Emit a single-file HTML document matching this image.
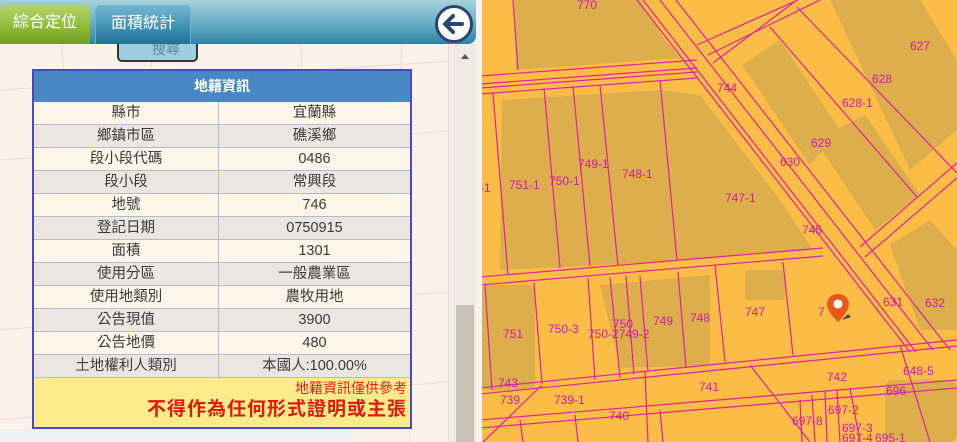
<!DOCTYPE html>
<html><head><meta charset="utf-8"><style>
*{margin:0;padding:0;box-sizing:border-box}
body{width:957px;height:442px;overflow:hidden;position:relative;background:#fff;font-family:"Liberation Sans","Noto Sans CJK TC",sans-serif}
#left{position:absolute;left:0;top:0;width:478px;height:442px;background:#fbf3e9;overflow:hidden}
#tabs{position:absolute;left:0;top:0;width:476px;height:44px;background:linear-gradient(#a7d2dc,#5fa9bf 60%,#2d84a6);border-radius:0 0 8px 0}
.tab{position:absolute;top:5px;height:39px;color:#fff;font-size:16px;line-height:36px;text-align:center;border-radius:6px 6px 0 0}
#t1{left:0;width:90px;background:linear-gradient(#b6d46a,#8db936 60%,#6f9d22)}
#t2{left:95px;width:96px;background:linear-gradient(#72b6cf,#3b8db0 60%,#236f95);border:1px solid #6fb0c8;border-bottom:none}
#back{position:absolute;left:435px;top:5px;width:38px;height:38px;border-radius:50%;background:#fff;border:3px solid #2a4572}
#btn{position:absolute;left:117px;top:44px;width:81px;height:18px;border:2px solid #333;border-top:none;border-radius:0 0 5px 5px;background:#9dd0dc;color:#5a8aa0;font-size:14px;line-height:10px;padding-left:33px;overflow:hidden}
#tbl{position:absolute;left:32px;top:69px;width:380px;height:360px;border:2px solid #4b48c8;background:#fdf5e8}
#hd{height:31px;background:#4a88c4;color:#fff;font-size:14px;font-weight:bold;text-align:center;line-height:31px}
.r{height:23px;display:flex;font-size:14.5px;color:#3a3a3a;line-height:22px;border-bottom:1px solid #b7b9cf}
.r div{text-align:center}
.r div:first-child{width:185px;border-right:1px solid #b7b9cf}
.r div:last-child{flex:1}
.r.e{background:#e9e7e0}
#ft{position:absolute;left:0;top:307px;width:376px;height:49px;background:#feeb8a;text-align:right;padding-right:3px}
#f1{color:#d22;font-size:14px;line-height:20px}
#f2{color:#e01a10;font-size:19px;font-weight:bold;line-height:24px;letter-spacing:1px}
#sb{position:absolute;left:448px;top:44px;width:28px;height:398px;background:#f0ece4;border-left:1px solid #ddd}
#thumb{position:absolute;left:456px;top:305px;width:18px;height:137px;background:#c9c2b6}
#bot{position:absolute;left:0;top:429px;width:352px;height:13px;background:#eef2f3}
#sep{position:absolute;left:478px;top:0;width:4px;height:442px;background:#f3f3f3}
#map{position:absolute;left:482px;top:0}
</style></head><body>
<div id="left">
<svg width="478" height="442" style="position:absolute;left:0;top:0" stroke="#f2d7dc" fill="none" stroke-width="1">
<path d="M0 90L470 60M0 160L470 130M60 0L80 442M150 0L160 442M300 0L310 442M400 0L410 442M0 330L470 290M0 420L470 380"/></svg>
<div id="bot"></div>
<div id="sb"></div><div style="position:absolute;left:461px;top:54px;width:0;height:0;border-left:4px solid transparent;border-right:4px solid transparent;border-bottom:5px solid #555"></div>
<div id="thumb"></div>
<div id="tabs"></div>
<div class="tab" id="t1">綜合定位</div>
<div class="tab" id="t2">面積統計</div>
<div id="back"><svg width="32" height="32" viewBox="0 0 32 32" style="position:absolute;left:0;top:0"><path d="M24 16H8M15 8L7 16L15 24" stroke="#2a4572" stroke-width="4" fill="none" stroke-linecap="round" stroke-linejoin="round"/></svg></div>
<div id="btn">搜尋</div>
<div id="tbl">
<div id="hd">地籍資訊</div>
<div class="r"><div>縣市</div><div>宜蘭縣</div></div>
<div class="r e"><div>鄉鎮市區</div><div>礁溪鄉</div></div>
<div class="r"><div>段小段代碼</div><div>0486</div></div>
<div class="r e"><div>段小段</div><div>常興段</div></div>
<div class="r"><div>地號</div><div>746</div></div>
<div class="r e"><div>登記日期</div><div>0750915</div></div>
<div class="r"><div>面積</div><div>1301</div></div>
<div class="r e"><div>使用分區</div><div>一般農業區</div></div>
<div class="r"><div>使用地類別</div><div>農牧用地</div></div>
<div class="r e"><div>公告現值</div><div>3900</div></div>
<div class="r"><div>公告地價</div><div>480</div></div>
<div class="r e"><div>土地權利人類別</div><div>本國人:100.00%</div></div>
<div id="ft"><div id="f1">地籍資訊僅供參考</div><div id="f2">不得作為任何形式證明或主張</div></div>
</div>
</div>
<div id="sep"></div>
<svg id="map" width="475" height="442" viewBox="2 0 475 442">
<rect x="0" y="0" width="477" height="442" fill="#fcbd46"/>
<g fill="#dcaf4c">
<path d="M34 0H160L185 40L200 58L36 70Z"/>
<path d="M22 100L180 90L220 95L300 200L333 250L180 262L20 270Z"/>
<path d="M262 65L300 40L360 130L330 165Z"/>
<path d="M335 140L385 115L440 195L395 230Z"/>
<path d="M350 0H440L477 60V130L430 170Z"/>
<path d="M410 245L450 220L477 250V330L440 330Z"/>
<path d="M120 285L230 275L230 365L140 368Z"/>
<rect x="0" y="285" width="55" height="105" rx="8"/>
<rect x="405" y="380" width="72" height="62" rx="8"/>
<rect x="265" y="270" width="40" height="30" rx="4"/>
</g>
<g stroke="#e0209f" stroke-width="1.2" fill="none">
<path d="M0 76L217 60M0 84L217 68M0 88L217 72M0 94L217 78"/>
<path d="M157 0L430 352M163 0L436 352M180 0L453 350M196 0L470 350"/>
<path d="M217 45L318 0M228 55L340 0M233 63L317 0"/>
<path d="M0 277L343 248M0 285L343 256"/>
<path d="M380 247L477 163M385 257L477 178"/>
<path d="M290 27L437 197M317 7L477 173"/>
<path d="M0 388L477 340M0 394L477 346M0 420L477 380M0 428L477 388"/>
<path d="M33 0L38 70M13 93L28 275M64 88L80 268M93 86L110 266M120 85L138 266M180 80L197 260"/>
<path d="M5 285L12 390M54 283L62 384M108 278L115 380M130 277L140 378M146 276L154 374M160 276L168 372M198 272L206 367M235 265L245 362M303 262L313 355"/>
<path d="M0 445L62 385M270 365L330 442M165 372L168 442M40 420L43 442M95 415L98 442M180 410L183 442M320 400L322 442M332 395L335 442M345 392L347 442M357 390L360 442M370 388L380 442M420 345L450 442"/>
</g>
<g fill="#d01aa8" font-size="12" font-family="Liberation Sans,sans-serif">
<text x="97" y="9">770</text><text x="430" y="50">627</text><text x="392" y="83">628</text>
<text x="237" y="92">744</text><text x="362" y="107">628-1</text><text x="331" y="147">629</text>
<text x="300" y="166">630</text><text x="98" y="168">749-1</text><text x="142" y="178">748-1</text>
<text x="0" y="192">-1</text><text x="29" y="189">751-1</text><text x="69" y="185">750-1</text>
<text x="245" y="202">747-1</text><text x="322" y="234">745</text>
<text x="403" y="306">631</text><text x="445" y="307">632</text>
<text x="265" y="316">747</text><text x="210" y="322">748</text><text x="173" y="325">749</text>
<text x="133" y="328">750</text><text x="68" y="333">750-3</text><text x="23" y="338">751</text>
<text x="108" y="338">750-2749-2</text><text x="338" y="316">7</text>
<text x="347" y="381">742</text><text x="219" y="391">741</text><text x="423" y="375">648-5</text>
<text x="18" y="387">743</text><text x="406" y="395">696</text><text x="20" y="404">739</text>
<text x="74" y="404">739-1</text><text x="129" y="420">740</text><text x="348" y="414">697-2</text>
<text x="312" y="425">697-8</text><text x="362" y="432">697-3</text><text x="362" y="442">697-4</text><text x="395" y="442">695-1</text>
</g>
<path d="M358 302C350 302 347 308 347 312C347 320 358 330 358 330C358 330 369 320 369 312C369 308 366 302 358 302Z" fill="#e8581a" transform="translate(0,-8)"/>
<circle cx="358" cy="304" r="4.5" fill="#fff"/>
<path d="M362 320L368 314L371 317Z" fill="#444"/>
</svg>
</body></html>
